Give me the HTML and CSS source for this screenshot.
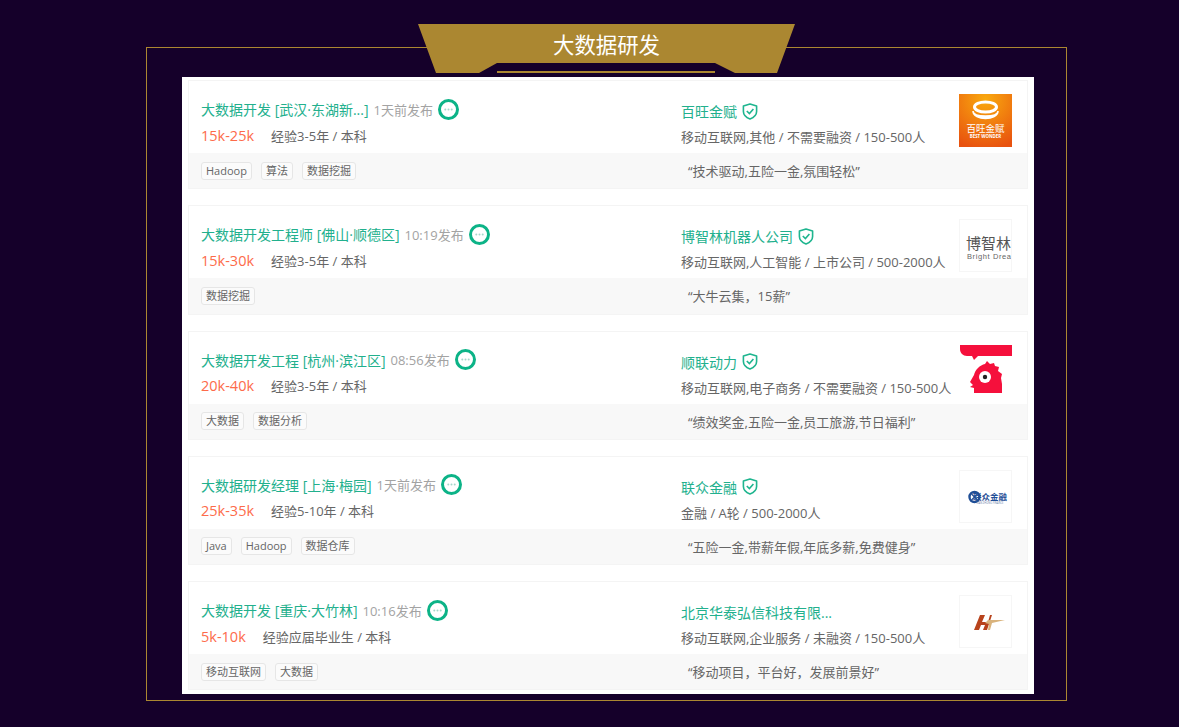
FILE: index.html
```html
<!DOCTYPE html>
<html lang="en">

<head>
    <meta charset="UTF-8">
    <title>大数据研发</title>
    <link rel="stylesheet" href="styles.css">
</head>

<body>
    <svg class="icon-defs" width="0" height="0">
        <symbol id="chat" viewBox="0 0 21 21">
            <circle cx="10.5" cy="10.5" r="9" fill="#fff" stroke="#0cb387" stroke-width="3"></circle>
            <circle cx="7.3" cy="10.6" r="1" fill="#a5d8cb"></circle>
            <circle cx="10.5" cy="10.6" r="1" fill="#a5d8cb"></circle>
            <circle cx="13.7" cy="10.6" r="1" fill="#a5d8cb"></circle>
        </symbol>
        <symbol id="shield" viewBox="0 0 16 17">
            <path d="M8 1 L14.6 3 V8.5 C14.6 12 11.5 14.6 8 16 C4.5 14.6 1.4 12 1.4 8.5 V3 Z" fill="none" stroke="#1fb58f" stroke-width="1.6" stroke-linejoin="round"></path>
            <path d="M4.8 8 L7.4 10.6 L11.4 6" fill="none" stroke="#1fb58f" stroke-width="1.6"></path>
        </symbol>
    </svg>

    <div class="frame">
        <div class="banner">
            <svg class="banner-bg" width="377" height="49" viewBox="0 0 377 49">
                <polygon points="0,0 377,0 359,49 317,49 297,39 79,39 61,49 18,49" fill="#ab8731"></polygon>
                <rect x="79" y="47" width="218" height="2" fill="#ab8731"></rect>
            </svg>
            <span class="banner-title">大数据研发</span>
        </div>

        <div class="panel">
            <div class="card">
                <div class="card-top">
                    <div class="job">
                        <div class="job-head">
                            <span class="job-name">大数据开发 [武汉·东湖新...]</span>
                            <span class="job-time">1天前发布</span>
                            <svg class="chat"><use href="#chat"></use></svg>
                        </div>
                        <div class="job-info"><span class="salary">15k-25k</span><span>经验3-5年 / 本科</span></div>
                    </div>
                    <div class="company">
                        <div class="company-head">
                            <span class="company-name">百旺金赋</span>
                            <svg class="shield"><use href="#shield"></use></svg>
                        </div>
                        <div class="company-info">移动互联网,其他 / 不需要融资 / 150-500人</div>
                    </div>
                    <div class="logo logo-orange">
                        <svg width="53" height="53" viewBox="0 0 53 53">
                            <defs>
                                <radialGradient id="orange" cx="50%" cy="10%" r="95%">
                                    <stop offset="0" stop-color="#f9a90e"></stop>
                                    <stop offset="1" stop-color="#e8520f"></stop>
                                </radialGradient>
                            </defs>
                            <rect width="53" height="53" fill="url(#orange)"></rect>
                            <ellipse cx="26.5" cy="13" rx="11" ry="5" fill="none" stroke="#fff" stroke-width="3"></ellipse>
                            <path d="M14 17 C14 27 39 27 39 17 C39 21 35 22 26.5 22 C18 22 14 21 14 17 Z" fill="#fff" stroke="#fff" stroke-width="1.5"></path>
                            <text x="26.5" y="38" class="logo-cn">百旺金赋</text>
                            <text x="26.5" y="44" class="logo-en">BEST WONDER</text>
                        </svg>
                    </div>
                </div>
                <div class="card-bottom">
                    <div class="tags">
                        <span class="tag">Hadoop</span>
                        <span class="tag">算法</span>
                        <span class="tag">数据挖掘</span>
                    </div>
                    <div class="slogan">“技术驱动,五险一金,氛围轻松”</div>
                </div>
            </div>

            <div class="card">
                <div class="card-top">
                    <div class="job">
                        <div class="job-head">
                            <span class="job-name">大数据开发工程师 [佛山·顺德区]</span>
                            <span class="job-time">10:19发布</span>
                            <svg class="chat"><use href="#chat"></use></svg>
                        </div>
                        <div class="job-info"><span class="salary">15k-30k</span><span>经验3-5年 / 本科</span></div>
                    </div>
                    <div class="company">
                        <div class="company-head">
                            <span class="company-name">博智林机器人公司</span>
                            <svg class="shield"><use href="#shield"></use></svg>
                        </div>
                        <div class="company-info">移动互联网,人工智能 / 上市公司 / 500-2000人</div>
                    </div>
                    <div class="logo logo-bright">
                        <span class="bright-cn">博智林</span>
                        <span class="bright-en">Bright Dream</span>
                    </div>
                </div>
                <div class="card-bottom">
                    <div class="tags">
                        <span class="tag">数据挖掘</span>
                    </div>
                    <div class="slogan">“大牛云集，15薪”</div>
                </div>
            </div>

            <div class="card">
                <div class="card-top">
                    <div class="job">
                        <div class="job-head">
                            <span class="job-name">大数据开发工程 [杭州·滨江区]</span>
                            <span class="job-time">08:56发布</span>
                            <svg class="chat"><use href="#chat"></use></svg>
                        </div>
                        <div class="job-info"><span class="salary">20k-40k</span><span>经验3-5年 / 本科</span></div>
                    </div>
                    <div class="company">
                        <div class="company-head">
                            <span class="company-name">顺联动力</span>
                            <svg class="shield"><use href="#shield"></use></svg>
                        </div>
                        <div class="company-info">移动互联网,电子商务 / 不需要融资 / 150-500人</div>
                    </div>
                    <div class="logo">
                        <svg width="53" height="53" viewBox="0 0 53 53">
                            <path d="M1 0 H53 V11 H19 L15 15 L13 11 H8 C4 11 1 8 1 4 Z" fill="#f5103c"></path>
                            <path d="M11 37 L15 30 C16 25 21 20 26 19 L28 16 L31 19 L35 18 L36 21 L40 22 L39 26 L43 29 L42 33 L43 39 V48 H15 V43 L11 42 L14 40 Z" fill="#f5103c"></path>
                            <circle cx="26" cy="32" r="6" fill="#fff"></circle>
                            <circle cx="26" cy="32" r="2.2" fill="#222"></circle>
                        </svg>
                    </div>
                </div>
                <div class="card-bottom">
                    <div class="tags">
                        <span class="tag">大数据</span>
                        <span class="tag">数据分析</span>
                    </div>
                    <div class="slogan">“绩效奖金,五险一金,员工旅游,节日福利”</div>
                </div>
            </div>

            <div class="card">
                <div class="card-top">
                    <div class="job">
                        <div class="job-head">
                            <span class="job-name">大数据研发经理 [上海·梅园]</span>
                            <span class="job-time">1天前发布</span>
                            <svg class="chat"><use href="#chat"></use></svg>
                        </div>
                        <div class="job-info"><span class="salary">25k-35k</span><span>经验5-10年 / 本科</span></div>
                    </div>
                    <div class="company">
                        <div class="company-head">
                            <span class="company-name">联众金融</span>
                            <svg class="shield"><use href="#shield"></use></svg>
                        </div>
                        <div class="company-info">金融 / A轮 / 500-2000人</div>
                    </div>
                    <div class="logo logo-framed">
                        <svg width="53" height="53" viewBox="0 0 53 53">
                            <circle cx="15.5" cy="27" r="5" fill="#fff" stroke="#1f4e96" stroke-width="2.4"></circle>
                            <path d="M12.5 24 L18.5 30 M18.5 24 L12.5 30" stroke="#1f4e96" stroke-width="1.2"></path>
                            <text x="31" y="29.5" class="lianzhong-cn">联众金融</text>
                            <text x="31" y="33.5" class="lianzhong-en">LIAN ZHONG FINANCE</text>
                        </svg>
                    </div>
                </div>
                <div class="card-bottom">
                    <div class="tags">
                        <span class="tag">Java</span>
                        <span class="tag">Hadoop</span>
                        <span class="tag">数据仓库</span>
                    </div>
                    <div class="slogan">“五险一金,带薪年假,年底多薪,免费健身”</div>
                </div>
            </div>

            <div class="card">
                <div class="card-top">
                    <div class="job">
                        <div class="job-head">
                            <span class="job-name">大数据开发 [重庆·大竹林]</span>
                            <span class="job-time">10:16发布</span>
                            <svg class="chat"><use href="#chat"></use></svg>
                        </div>
                        <div class="job-info"><span class="salary">5k-10k</span><span>经验应届毕业生 / 本科</span></div>
                    </div>
                    <div class="company">
                        <div class="company-head">
                            <span class="company-name">北京华泰弘信科技有限...</span>
                        </div>
                        <div class="company-info">移动互联网,企业服务 / 未融资 / 150-500人</div>
                    </div>
                    <div class="logo logo-framed">
                        <svg width="53" height="53" viewBox="0 0 53 53">
                            <path d="M15 35 L21 20 H26 L23 27 H29 L31 20 H33 L28 35 H24 L26 30 H22 L20 35 Z" fill="#b8431c"></path>
                            <path d="M29 25 L46 25 L33 28 L31 35 H29 L30 29 L26 28 Z" fill="#d9b37c"></path>
                        </svg>
                    </div>
                </div>
                <div class="card-bottom">
                    <div class="tags">
                        <span class="tag">移动互联网</span>
                        <span class="tag">大数据</span>
                    </div>
                    <div class="slogan">“移动项目，平台好，发展前景好”</div>
                </div>
            </div>
        </div>
    </div>
</body>

</html>
```

FILE: styles.css
```css
html,
body {
    margin: 0;
    height: 727px;
    overflow: hidden;
}

body {
    background-color: #15002a;
    font-family: "Open Sans", "Noto Sans CJK SC", sans-serif;
    padding-top: 47px;
    box-sizing: border-box;
}

.icon-defs {
    position: absolute;
}

.frame {
    position: relative;
    box-sizing: border-box;
    width: 921px;
    height: 654px;
    margin-left: 146px;
    padding: 29px 33px 0 35px;
    border: 1px solid #ab8731;
}

.banner {
    position: absolute;
    top: -24px;
    left: 271px;
    width: 377px;
    height: 49px;
}

.banner-bg {
    display: block;
}

.banner-title {
    position: absolute;
    top: 3px;
    left: 0;
    width: 100%;
    text-align: center;
    color: #fff;
    font-size: 21.4px;
    line-height: 35px;
}

.panel {
    display: flex;
    flex-direction: column;
    gap: 16px;
    box-sizing: border-box;
    width: 852px;
    height: 617px;
    padding: 3px 6px 0;
    background-color: #fff;
}

.card {
    height: 109.25px;
    box-sizing: border-box;
    border: 1px solid #f4f4f4;
    flex-shrink: 0;
}

.card-top {
    display: flex;
    height: 72px;
    padding-left: 12px;
}

.job {
    width: 480px;
    padding-top: 17px;
}

.job-head,
.company-head {
    display: flex;
    align-items: center;
    height: 22px;
}

.job-name,
.company-name {
    color: #22b08d;
    font-size: 14px;
}

.job-time {
    margin-left: 5px;
    color: #a3a3a3;
    font-size: 13px;
}

.chat {
    width: 21px;
    height: 21px;
    margin-left: 5px;
}

.job-info {
    display: flex;
    align-items: center;
    height: 26px;
    margin-top: 2px;
    color: #666;
    font-size: 13px;
}

.salary {
    margin-right: 17px;
    color: #fd6b4a;
    font-size: 14.5px;
}

.company {
    width: 278px;
    padding-top: 19px;
}

.company-head .shield {
    width: 16px;
    height: 17px;
    margin-left: 5px;
}

.company-info {
    margin-top: 2px;
    line-height: 26px;
    color: #666;
    font-size: 13px;
    white-space: nowrap;
}

.logo {
    width: 53px;
    height: 53px;
    margin-top: 13px;
    overflow: hidden;
    flex-shrink: 0;
}

.logo svg {
    display: block;
}

.logo-framed,
.logo-bright {
    box-sizing: border-box;
    border: 1px solid #f6f6f6;
}

.logo-framed svg {
    margin: -1px;
}

.logo-cn {
    fill: #fff;
    font-size: 9.5px;
    text-anchor: middle;
}

.logo-en {
    fill: #fff;
    font-size: 4.4px;
    font-weight: 700;
    text-anchor: middle;
}

.bright-cn {
    display: block;
    margin: 15px 0 0 6px;
    color: #555;
    font-size: 15px;
    line-height: 16px;
    white-space: nowrap;
}

.bright-en {
    display: block;
    margin: 1px 0 0 7px;
    color: #666;
    font-family: "Liberation Sans", sans-serif;
    font-size: 7.5px;
    letter-spacing: 0.6px;
    line-height: 10px;
    white-space: nowrap;
}

.lianzhong-cn {
    fill: #1f4e96;
    font-size: 8.5px;
    font-weight: 700;
    text-anchor: middle;
}

.lianzhong-en {
    fill: #6f86ad;
    font-size: 2.6px;
    text-anchor: middle;
}

.card-bottom {
    display: flex;
    align-items: center;
    height: 35.25px;
    padding-left: 12px;
    background-color: #f8f8f8;
}

.tags {
    display: flex;
    gap: 9px;
    width: 487px;
}

.tag {
    height: 18px;
    box-sizing: border-box;
    padding: 0 4px;
    border: 1px solid #e6e6e6;
    border-radius: 3px;
    background-color: #fbfbfb;
    color: #666;
    font-size: 11px;
    line-height: 16px;
}

.slogan {
    color: #666;
    font-size: 13px;
}
```
